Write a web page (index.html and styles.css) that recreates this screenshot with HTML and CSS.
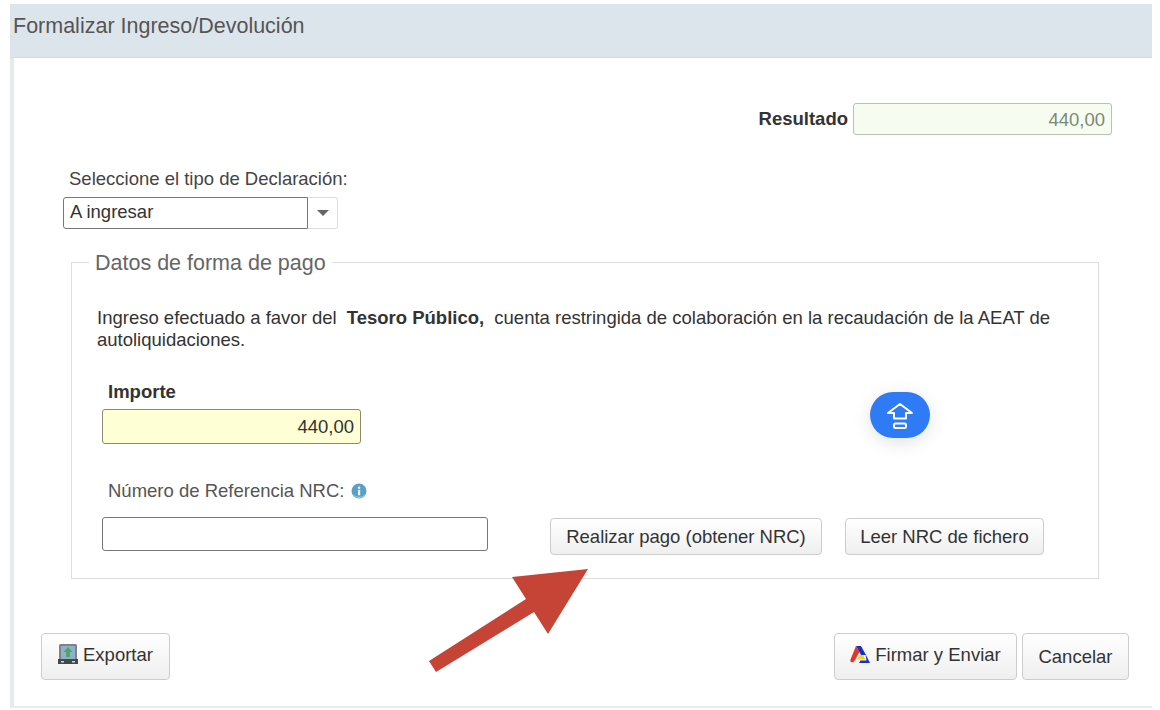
FILE: index.html
```html
<!DOCTYPE html>
<html lang="es">
<head>
    <meta charset="UTF-8">
    <title>Formalizar Ingreso/Devolución</title>
    <link rel="stylesheet" href="styles.css">
</head>
<body>
    <div class="panel">
        <div class="panel-title">Formalizar Ingreso/Devolución</div>
        <div class="panel-body">
            <div class="result-row">
                <label class="result-label">Resultado</label>
                <div class="result-value">440,00</div>
            </div>

            <div class="type-block">
                <div class="type-label">Seleccione el tipo de Declaración:</div>
                <div class="combo">
                    <div class="combo-value">A ingresar</div>
                    <div class="combo-btn"><span class="caret"></span></div>
                </div>
            </div>

            <fieldset class="pay-box">
                <legend>Datos de forma de pago</legend>
                <p class="pay-text">Ingreso efectuado a favor del <b class="pay-strong">Tesoro Público,</b> cuenta restringida de colaboración en la recaudación de la AEAT de autoliquidaciones.</p>
                <div class="amount-label">Importe</div>
                <div class="amount-value">440,00</div>
                <div class="nrc-label">
                    Número de Referencia NRC:
                    <svg class="info-icon" width="16" height="16" viewBox="0 0 16 16">
                        <circle cx="8" cy="8" r="7.500" fill="#5c9fc4"/>
                        <path d="M1.500 10.500a7 7 0 0 0 13 0a8 8 0 0 1-13 0z" fill="#a5cfdc"/>
                        <rect x="7" y="6.800" width="2.200" height="5.400" fill="#e8f3f7"/>
                        <circle cx="8.100" cy="4.800" r="1.200" fill="#e8f3f7"/>
                    </svg>
                </div>
                <div class="nrc-row">
                    <div class="nrc-input"></div>
                    <button class="btn btn-pay">Realizar pago (obtener NRC)</button>
                    <button class="btn btn-read">Leer NRC de fichero</button>
                </div>
            </fieldset>

            <div class="actions">
                <button class="btn btn-big btn-export">
                    <svg width="20" height="21" viewBox="0 0 20 21">
                        <rect x="1" y="0" width="18" height="20" rx="1.500" fill="#7d8388"/>
                        <rect x="3" y="2" width="14" height="13" fill="#8fb0cc"/>
                        <path d="M10 3l4.500 5h-2.600v5h-3.800v-5h-2.600z" fill="#4aa862"/>
                        <rect x="0" y="15" width="20" height="5" fill="#44484c"/>
                        <rect x="3" y="17" width="3" height="1.500" fill="#cfd3d6"/>
                        <rect x="14" y="17" width="3" height="1.500" fill="#cfd3d6"/>
                    </svg>
                    Exportar
                </button>
                <div class="actions-right">
                    <button class="btn btn-big btn-sign">
                        <svg width="20" height="18" viewBox="0 0 20 18">
                            <path d="M6 0h5l5 9h-5z" fill="#1c2fc4"/>
                            <path d="M6 0l3.500 6l-5 9c-2 2.500-5 1-4-1.500z" fill="#e0392b"/>
                            <path d="M9.500 9h3.500l2.500 4.500h-8.500z" fill="#f5d327"/>
                            <path d="M15.500 8l4.500 9h-11l1.500-2.500h6z" fill="#1c2fc4"/>
                        </svg>
                        Firmar y Enviar
                    </button>
                    <button class="btn btn-big btn-cancel">Cancelar</button>
                </div>
            </div>
        </div>
    </div>

    <!-- boton flotante -->
    <div class="float-btn">
        <svg width="30" height="30" viewBox="0 0 30 30" fill="none" stroke="#fff" stroke-width="2" stroke-linejoin="round">
            <path d="M15 4l12 9h-6v5.500h-12v-5.500h-6z"/>
            <rect x="9" y="23.500" width="12" height="4.500" rx="1.500"/>
        </svg>
    </div>

    <!-- flecha roja encima de la captura -->
    <svg class="red-arrow" width="1160" height="710" viewBox="0 0 1160 710">
        <path d="M588 569L512 577L526 599L429 661L436 672L534 612L548 634Z" fill="#c54436"/>
    </svg>
</body>
</html>
```

FILE: styles.css
```css
* {
    box-sizing: border-box;
}

html, body {
    margin: 0;
    padding: 0;
    height: 100%;
    overflow: hidden;
}

body {
    width: 1160px;
    height: 710px;
    background: #fff;
    font-family: "Liberation Sans", Arial, sans-serif;
    color: #333;
    padding: 4px 8px 0 10px;
}

.panel {
    height: 704px;
    border-left: 4px solid #e3eaf0;
    border-bottom: 2px solid #eaeaea;
    position: relative;
}

.panel-title {
    height: 54px;
    margin-left: -4px;
    background: #dde5ec;
    border-bottom: 1px solid #d3dce4;
    color: #555;
    font-size: 21.500px;
    padding: 10px 0 0 3px;
}

.panel-body {
    padding: 45px 0 0 27px;
}

.result-row {
    display: flex;
    justify-content: flex-end;
    align-items: center;
    gap: 5px;
    padding-right: 40px;
}

.result-label {
    font-weight: bold;
    font-size: 18.500px;
    color: #333;
}

.result-value {
    width: 259px;
    height: 32px;
    border: 1px solid #b9c4b0;
    border-radius: 3px;
    background: #f6fcef;
    color: #7c8a78;
    font-size: 18.500px;
    text-align: right;
    padding: 5px 6px 0 0;
}

.type-block {
    margin-top: 33px;
}

.type-label {
    font-size: 18.500px;
    padding-left: 28px;
    color: #444;
}

.combo {
    display: flex;
    width: 275px;
    height: 32px;
    margin: 7px 0 0 22px;
}

.combo-value {
    width: 245px;
    border: 1px solid #777;
    border-radius: 3px 0 0 3px;
    font-size: 18.500px;
    padding: 3px 0 0 6px;
}

.combo-btn {
    flex: 1;
    border: 1px solid #ddd;
    border-left: 0;
    border-radius: 0 3px 3px 0;
    display: flex;
    align-items: center;
    justify-content: center;
}

.caret {
    width: 0;
    height: 0;
    border-left: 6px solid transparent;
    border-right: 6px solid transparent;
    border-top: 6px solid #666;
}

.pay-box {
    margin: 20px 0 0 30px;
    padding: 0 25px;
    width: 1028px;
    height: 330px;
    border: 1px solid #ddd;
    min-width: 0;
}

.pay-box legend {
    font-size: 21.500px;
    color: #666;
    padding: 2px 6px 0;
    margin-left: -8px;
}

.pay-text {
    margin: 31px 0 0;
    font-size: 18.500px;
    line-height: 22px;
    color: #333;
}

.pay-strong {
    margin: 0 5px;
}

.amount-label {
    margin: 30px 0 0 11px;
    font-size: 18.500px;
    font-weight: bold;
}

.amount-value {
    width: 259px;
    height: 35px;
    margin: 6px 0 0 5px;
    border: 1px solid #8c8c6c;
    border-radius: 3px;
    background: #ffffd5;
    font-size: 18.500px;
    text-align: right;
    padding: 6px 6px 0 0;
}

.nrc-label {
    display: flex;
    align-items: center;
    gap: 7px;
    margin: 36px 0 0 11px;
    font-size: 18.500px;
    color: #555;
}

.nrc-row {
    display: flex;
    align-items: flex-start;
    margin: 15px 0 0 5px;
}

.nrc-input {
    width: 386px;
    height: 34px;
    border: 1px solid #777;
    border-radius: 3px;
}

.btn {
    border: 1px solid #ccc;
    border-radius: 4px;
    background: linear-gradient(#fff, #efefef);
    font-family: inherit;
    font-size: 18.500px;
    color: #333;
    padding: 0;
}

.btn-pay {
    width: 272px;
    height: 37px;
    margin: 1px 0 0 62px;
}

.btn-read {
    width: 199px;
    height: 37px;
    margin: 1px 0 0 23px;
}

.actions {
    display: flex;
    justify-content: space-between;
    margin-top: 54px;
    padding-right: 23px;
}

.actions-right {
    display: flex;
    gap: 5px;
}

.btn-big {
    height: 47px;
    display: flex;
    align-items: center;
    justify-content: center;
    gap: 5px;
    padding-bottom: 4px;
}

.btn-export {
    width: 129px;
}

.btn-sign {
    width: 183px;
}

.btn-cancel {
    width: 107px;
    padding-bottom: 0;
}

.float-btn {
    position: absolute;
    left: 870px;
    top: 392px;
    width: 60px;
    height: 46px;
    border-radius: 23px;
    background: #2f7bf5;
    box-shadow: 0 4px 18px rgba(0, 0, 0, 0.12);
    display: flex;
    align-items: center;
    justify-content: center;
}

.red-arrow {
    position: absolute;
    left: 0;
    top: 0;
    pointer-events: none;
}
```
